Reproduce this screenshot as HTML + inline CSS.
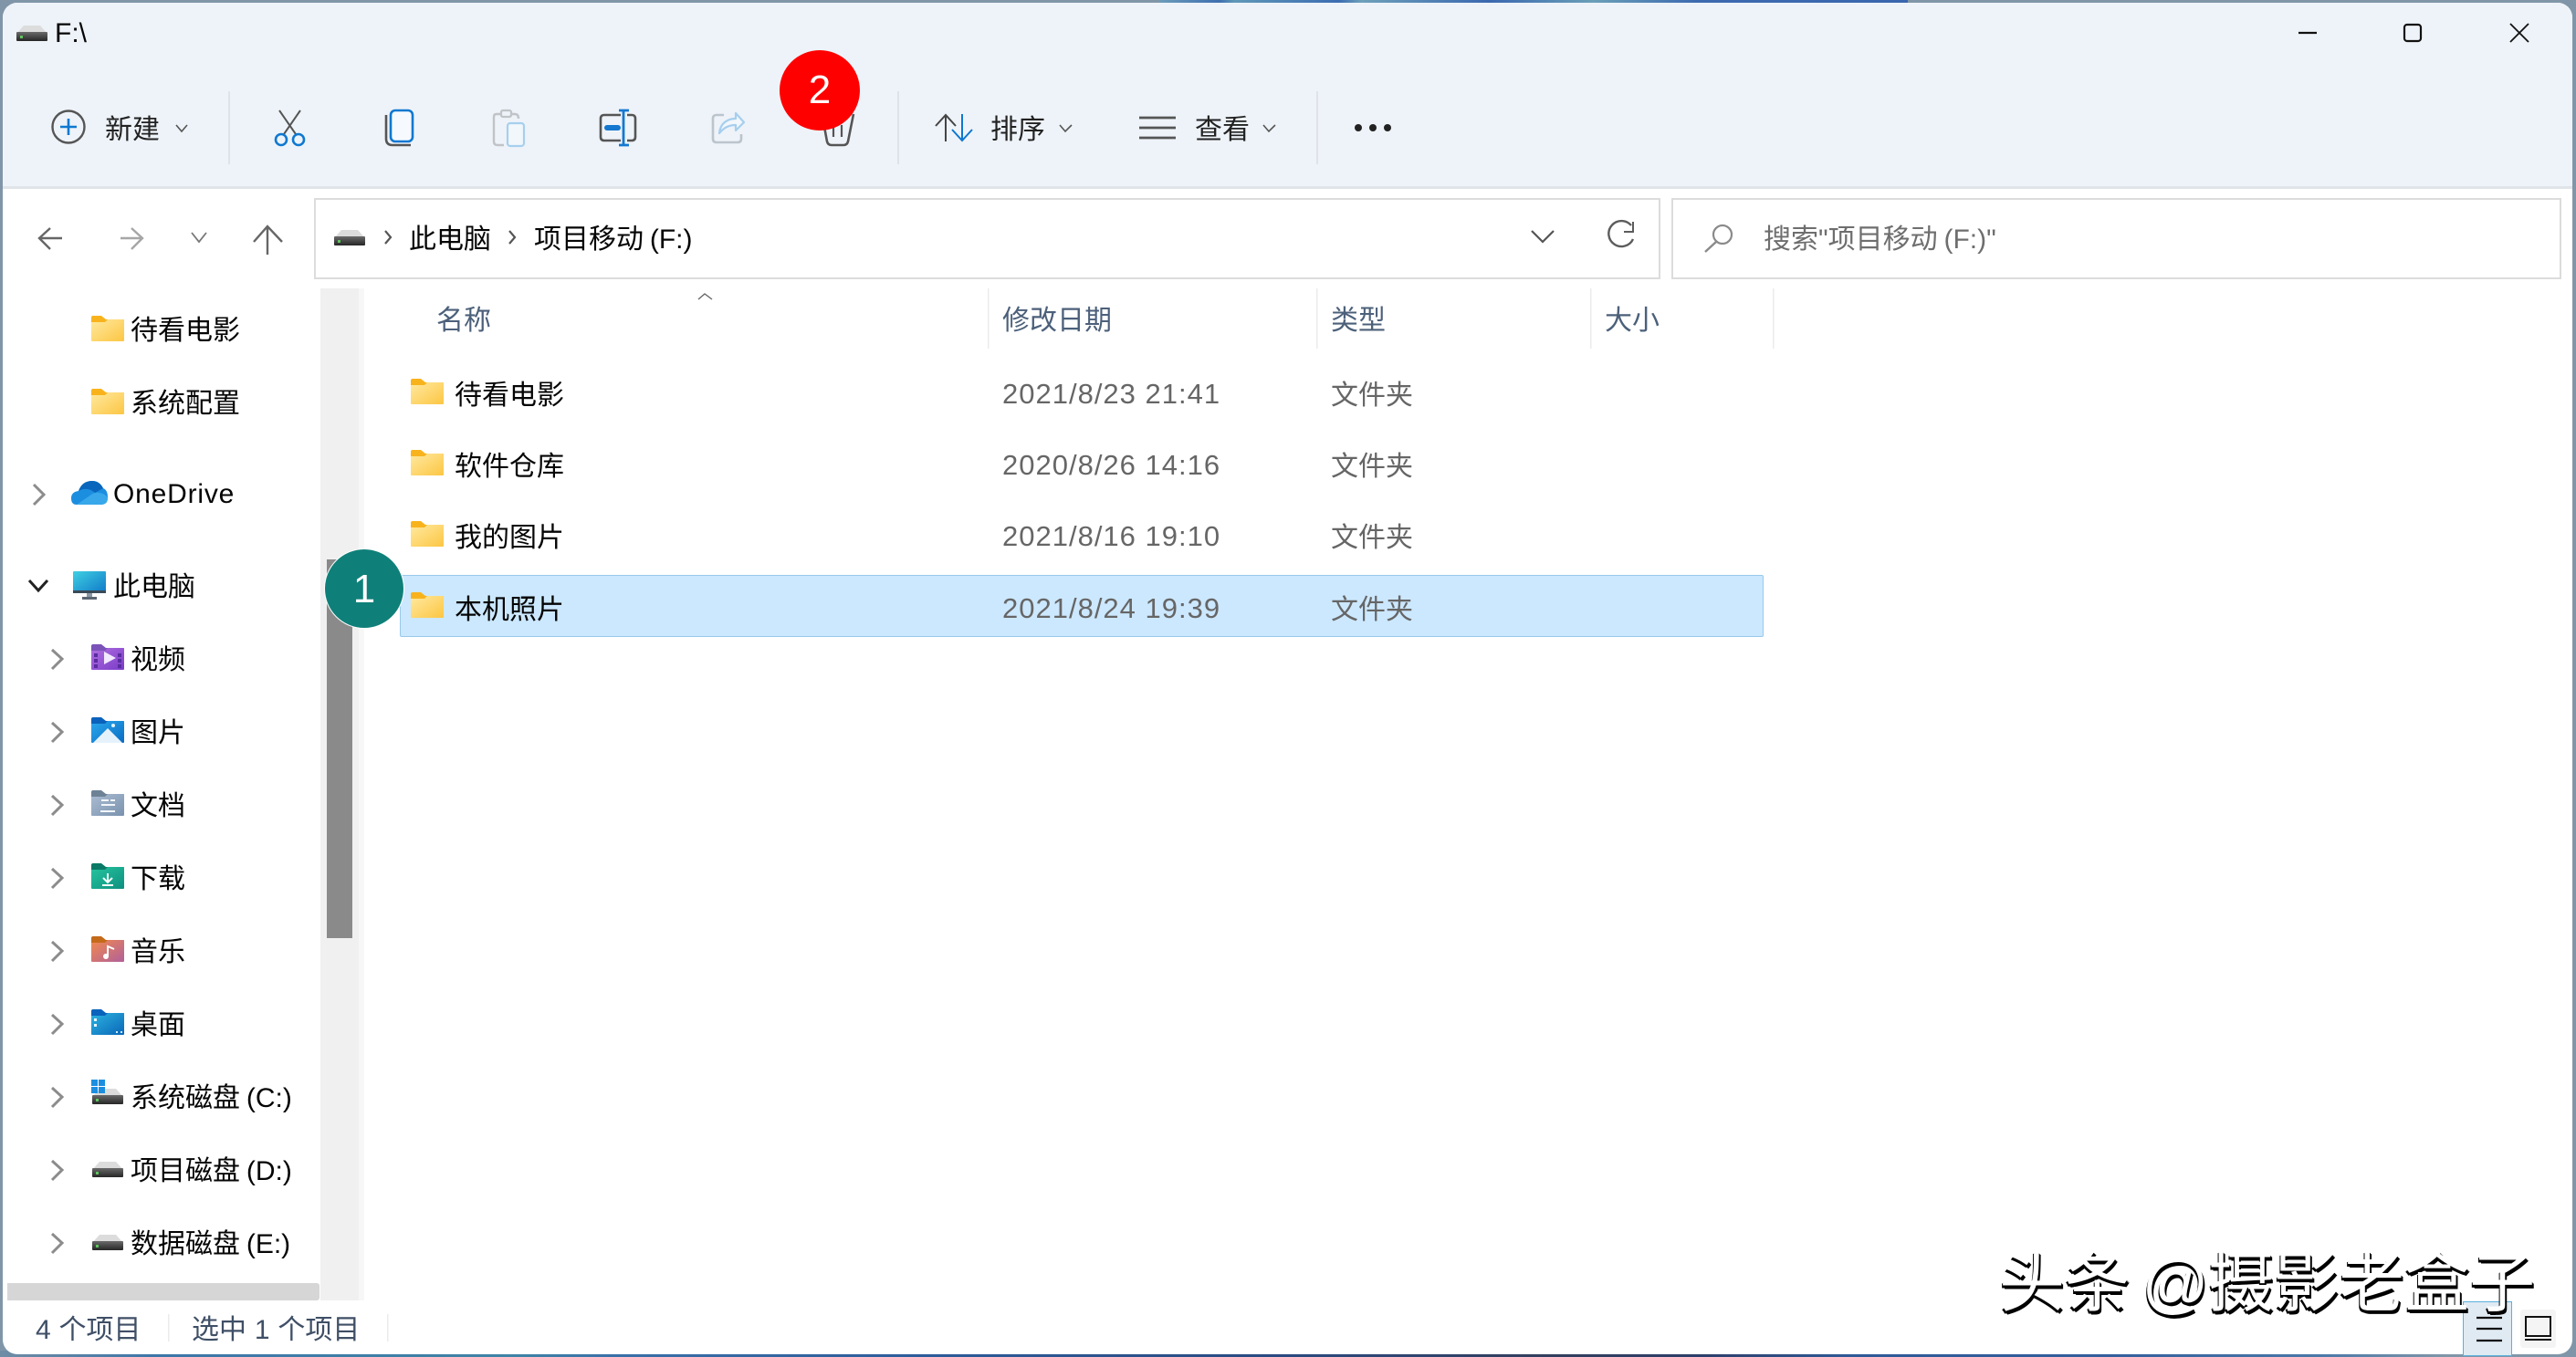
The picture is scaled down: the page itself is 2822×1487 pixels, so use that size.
<!DOCTYPE html>
<html lang="zh-CN">
<head>
<meta charset="utf-8">
<title>F:\</title>
<style>
html,body{margin:0;padding:0;width:2822px;height:1487px;overflow:hidden;background:#8096a8}
body{position:relative;font-family:"Liberation Sans","Noto Sans CJK SC",sans-serif;font-size:30px;color:#050505}
#strip-top{position:absolute;left:1270px;top:0;width:820px;height:6px;background:linear-gradient(90deg,#6b9cba 0,#3f6fb0 8%,#5f98b8 10%,#3b6cb2 24%,#6ea0ba 27%,#3a68b0 44%,#6a9fb8 58%,#3c69b0 72%,#3a66ae 100%)}
#strip-bot{position:absolute;left:0;top:1480px;width:2822px;height:7px;background:linear-gradient(90deg,#6f8ca5 0,#3d76a8 6%,#3f84a6 20%,#3a6fa8 24%,#2d5c9a 36%,#2a4a80 50%,#333f5e 60%,#2d3f6a 66%,#2f5a98 72%,#345f9d 82%,#4a78a8 90%,#8096a8 95%)}
#win{position:absolute;left:3px;top:3px;width:2815px;height:1481px;background:#fff;border-radius:16px;overflow:hidden}
#bar{position:absolute;left:0;top:0;width:2815px;height:201px;background:#eef3f9;border-bottom:3px solid #dfe4e8}
.t{position:absolute;height:40px;line-height:40px;white-space:nowrap;margin-top:2px;word-spacing:-1.5px}
.b{position:absolute}
.hd{color:#4c607a}
.dt{color:#666;font-size:31px;letter-spacing:1px;word-spacing:0;margin-top:0}
.ty{color:#666}
.st{color:#3f4f66;word-spacing:.5px}
#svg{position:absolute;left:0;top:0}
.c{position:absolute;border-radius:50%;color:#fff;text-align:center}
</style>
</head>
<body>
<div id="strip-top"></div>
<div id="strip-bot"></div>
<div id="win"><div id="bar"></div></div>

<!-- address + search -->
<div class="b" style="left:344px;top:217px;width:1471px;height:85px;border:2px solid #dcdcdc;background:#fff"></div>
<div class="b" style="left:1831px;top:217px;width:971px;height:85px;border:2px solid #dcdcdc;background:#fff"></div>

<!-- nav scrollbars -->
<div class="b" style="left:351px;top:316px;width:42px;height:1109px;background:#f0f0f0"></div>
<div class="b" style="left:393px;top:316px;width:6px;height:1109px;background:#f7f7f7"></div>
<div class="b" style="left:358px;top:613px;width:28px;height:415px;background:#8a8a8a"></div>
<div class="b" style="left:8px;top:1406px;width:342px;height:19px;background:#d6d6d6;border-radius:0 3px 3px 0"></div>

<!-- selected row -->
<div class="b" style="left:438px;top:630px;width:1494px;height:68px;background:#cce8ff;border:1px solid #99c9ea;border-radius:2px;box-sizing:border-box"></div>

<!-- view buttons -->
<div class="b" style="left:2698px;top:1426px;width:52px;height:58px;background:#dfeaf3;border:1px solid #5cb0dc"></div>
<div class="b" style="left:2761px;top:1435px;width:39px;height:42px;background:#f4f4f4;border-radius:3px"></div>

<svg id="svg" width="2822" height="1487" viewBox="0 0 2822 1487" xmlns="http://www.w3.org/2000/svg">
<defs>
<linearGradient id="fg" x1="0" y1="0" x2="1" y2="1"><stop offset="0" stop-color="#ffe9a0"/><stop offset="1" stop-color="#fcc643"/></linearGradient>
<linearGradient id="dg" x1="0" y1="0" x2="0" y2="1"><stop offset="0" stop-color="#6a6a6a"/><stop offset="1" stop-color="#262626"/></linearGradient>
<linearGradient id="vg" x1="0" y1="0" x2="1" y2="1"><stop offset="0" stop-color="#b06ee0"/><stop offset="1" stop-color="#7a3cc8"/></linearGradient>
<linearGradient id="pg" x1="0" y1="0" x2="1" y2="1"><stop offset="0" stop-color="#2aa8ec"/><stop offset="1" stop-color="#0a6cc4"/></linearGradient>
<linearGradient id="dcg" x1="0" y1="0" x2="1" y2="1"><stop offset="0" stop-color="#aabcd2"/><stop offset="1" stop-color="#7a92ae"/></linearGradient>
<linearGradient id="dlg" x1="0" y1="0" x2="1" y2="1"><stop offset="0" stop-color="#26c49e"/><stop offset="1" stop-color="#0e9080"/></linearGradient>
<linearGradient id="mg" x1="0" y1="0" x2="1" y2="1"><stop offset="0" stop-color="#f28a4e"/><stop offset="1" stop-color="#b0609a"/></linearGradient>
<linearGradient id="deg" x1="0" y1="0" x2="1" y2="1"><stop offset="0" stop-color="#2cb4e0"/><stop offset="1" stop-color="#0a66b8"/></linearGradient>
<linearGradient id="scr" x1="0" y1="0" x2="1" y2="1"><stop offset="0" stop-color="#3fd0e2"/><stop offset="1" stop-color="#0f78c8"/></linearGradient>
<symbol id="folder" viewBox="0 0 36 28" width="36" height="28" overflow="visible">
<path d="M0 2Q0 0 2 0H11L16 4H35Q36 4 36 5V8H0Z" fill="#f8b31c"/>
<path d="M0 7H15L18 4H35Q36 4 36 5V27Q36 28 35 28H1Q0 28 0 27Z" fill="url(#fg)"/>
</symbol>
<symbol id="drive" viewBox="0 0 34 17" width="34" height="17" overflow="visible">
<path d="M0 9L8 0H26L34 9Z" fill="#dcdcdc"/>
<rect x="0" y="7" width="34" height="10" rx="1" fill="url(#dg)"/>
<rect x="4" y="11" width="3" height="3" fill="#5ec45e"/>
</symbol>
</defs>

<!-- title icon -->
<use href="#drive" x="18" y="28"/>

<!-- new -->
<circle cx="75" cy="139" r="17.5" fill="none" stroke="#555" stroke-width="2.4"/>
<path d="M75 130V148M66 139H84" stroke="#0f78d0" stroke-width="2.6" fill="none"/>
<path d="M193 137L199 144L205 137" stroke="#555" stroke-width="1.6" fill="none"/>
<rect x="250" y="100" width="2" height="80" fill="#dfe3e8"/>

<!-- cut -->
<path d="M306 121L324 147M329 121L311 147" stroke="#555" stroke-width="2" fill="none"/>
<circle cx="308" cy="153" r="6" fill="none" stroke="#0f78d0" stroke-width="2.6"/>
<circle cx="327" cy="153" r="6" fill="none" stroke="#0f78d0" stroke-width="2.6"/>

<!-- copy -->
<path d="M423 126V152Q423 159 430 159H450" stroke="#555" stroke-width="2.6" fill="none"/>
<rect x="428" y="121" width="24" height="34" rx="5" fill="#f6fafe" stroke="#0f78d0" stroke-width="2.6"/>

<!-- paste -->
<path d="M549 125H544Q541 125 541 128V155Q541 159 545 159H552M568 128V130Q568 125 564 125H560" stroke="#c0c4c8" stroke-width="2.4" fill="none"/>
<rect x="549" y="121" width="11" height="7" rx="2" fill="#eef3f9" stroke="#c0c4c8" stroke-width="2.2"/>
<rect x="556" y="135" width="18" height="25" rx="3" fill="#f2f7fb" stroke="#a6cfee" stroke-width="2.2"/>

<!-- rename -->
<path d="M680 126H662Q658 126 658 130V150Q658 154 662 154H680M687 126H692Q696 126 696 130V150Q696 154 692 154H687" stroke="#555" stroke-width="2.6" fill="none"/>
<rect x="662" y="137" width="18" height="6" rx="3" fill="#1478d0"/>
<path d="M683 121V159M678 121H689M678 159H689" stroke="#1478d0" stroke-width="2.8" fill="none"/>

<!-- share -->
<path d="M793 126H785Q781 126 781 130V152Q781 156 785 156H808Q812 156 812 152V147" stroke="#bcc4cc" stroke-width="2.6" fill="none"/>
<path d="M788 146C789 135 797 130 806 130V124L815 134L806 143V137C798 137 793 140 788 146Z" fill="#f2f7fb" stroke="#a6cfee" stroke-width="2.2" stroke-linejoin="round"/>

<!-- delete -->
<path d="M901 128L906 155Q907 159 911 159H924Q928 159 929 155L935 125" stroke="#555" stroke-width="2.6" fill="none"/>
<path d="M913 137V150M922 137V150" stroke="#555" stroke-width="2.2" fill="none"/>

<rect x="983" y="100" width="2" height="80" fill="#dfe3e8"/>

<!-- sort -->
<path d="M1036 155V126M1025 138L1036 126L1047 138" stroke="#444" stroke-width="2" fill="none"/>
<path d="M1054 125V154M1043 142L1054 154L1065 142" stroke="#0f78d0" stroke-width="2" fill="none"/>
<path d="M1161 137L1167 144L1174 137" stroke="#555" stroke-width="1.6" fill="none"/>

<!-- view -->
<path d="M1248 129H1288M1248 140H1288M1248 151H1288" stroke="#555" stroke-width="2.8" fill="none"/>
<path d="M1384 137L1390 144L1397 137" stroke="#555" stroke-width="1.6" fill="none"/>
<rect x="1442" y="100" width="2" height="80" fill="#dfe3e8"/>

<!-- more -->
<circle cx="1488" cy="140" r="4" fill="#222"/><circle cx="1504" cy="140" r="4" fill="#222"/><circle cx="1520" cy="140" r="4" fill="#222"/>

<!-- window controls -->
<path d="M2518 36H2538" stroke="#111" stroke-width="2.2"/>
<rect x="2634" y="27" width="18" height="18" rx="3" fill="none" stroke="#111" stroke-width="2.2"/>
<path d="M2750 26L2770 46M2770 26L2750 46" stroke="#111" stroke-width="1.8"/>

<!-- nav arrows -->
<path d="M67 261H43M54 250L42 261L54 273" stroke="#666" stroke-width="2.4" fill="none" transform="translate(1 0)"/>
<path d="M132 261H155M144 250L156 261L144 273" stroke="#a6a6a6" stroke-width="2.4" fill="none"/>
<path d="M210 255L218 265L226 255" stroke="#777" stroke-width="1.8" fill="none"/>
<path d="M293 279V249M278 265L293 248L309 265" stroke="#666" stroke-width="2.4" fill="none"/>

<!-- address -->
<use href="#drive" x="366" y="252"/>
<path d="M422 253L428 260L422 267" stroke="#555" stroke-width="2.2" fill="none"/>
<path d="M558 253L564 260L558 267" stroke="#555" stroke-width="2.2" fill="none"/>
<path d="M1678 253L1690 265L1702 253" stroke="#555" stroke-width="2.2" fill="none"/>
<path d="M1788 247A14 14 0 1 0 1790 262" stroke="#5c5c5c" stroke-width="2.4" fill="none" transform="translate(-1 0)"/>
<path d="M1789 243V254H1779" stroke="#5c5c5c" stroke-width="2" fill="none"/>

<!-- search -->
<circle cx="1887" cy="257" r="10" fill="none" stroke="#8a8a8a" stroke-width="2.2"/>
<path d="M1880 265L1868 276" stroke="#8a8a8a" stroke-width="2.4"/>

<!-- nav chevrons -->
<g stroke="#8c8c8c" stroke-width="3" fill="none">
<path d="M37 531L48 542L37 553"/>
<path d="M57 712L68 722L57 733"/><path d="M57 792L68 802L57 813"/><path d="M57 872L68 882L57 893"/>
<path d="M57 952L68 962L57 973"/><path d="M57 1032L68 1042L57 1053"/><path d="M57 1112L68 1122L57 1133"/>
<path d="M57 1192L68 1202L57 1213"/><path d="M57 1272L68 1282L57 1293"/><path d="M57 1352L68 1362L57 1373"/>
</g>
<path d="M32 636L42 647L52 636" stroke="#222" stroke-width="3" fill="none"/>

<!-- quick folders -->
<use href="#folder" x="100" y="346"/>
<use href="#folder" x="100" y="426"/>

<!-- OneDrive -->
<path d="M84 553Q78 553 78 546Q78 539 86 538Q90 527 101 527Q109 527 113 535Q118 537 118 545Q118 553 110 553Z" fill="#1c8ee0"/>
<path d="M86 538Q90 527 101 527Q109 527 113 535L104 540Q96 533 86 538Z" fill="#0a66bc"/>
<path d="M84 553L100 542Q105 538 113 541Q118 544 118 546Q118 553 110 553Z" fill="#38a8ea"/>

<!-- monitor -->
<rect x="80" y="626" width="36" height="24" rx="1" fill="url(#scr)"/>
<rect x="80" y="647" width="36" height="3" fill="#3a4a58"/>
<rect x="95" y="650" width="6" height="4" fill="#8a98a6"/>
<rect x="90" y="654" width="16" height="3" fill="#5a6672"/>

<!-- video -->
<path d="M100 708Q100 706 102 706H111L116 710H135Q136 710 136 711V716H100Z" fill="#7b52b8"/>
<path d="M100 713H115L118 710H135Q136 710 136 711V733Q136 734 135 734H101Q100 734 100 733Z" fill="url(#vg)"/>
<path d="M114 714L127 721L114 728Z" fill="#f2e8ff"/>
<path d="M103 716h4v4h-4zM103 722h4v4h-4zM103 728h4v4h-4zM129 716h4v4h-4zM129 722h4v4h-4zM129 728h4v4h-4z" fill="#5a2ca0"/>

<!-- pictures -->
<path d="M100 788Q100 786 102 786H111L116 790H135Q136 790 136 791V796H100Z" fill="#0a62bc"/>
<path d="M100 793H115L118 790H135Q136 790 136 791V813Q136 814 135 814H101Q100 814 100 813Z" fill="url(#pg)"/>
<path d="M102 814L118 798L134 814Z" fill="#e6f2fb"/>
<circle cx="124" cy="795" r="2" fill="#e6f2fb"/>

<!-- documents -->
<path d="M100 868Q100 866 102 866H111L116 870H135Q136 870 136 871V876H100Z" fill="#6e8296"/>
<path d="M100 873H115L118 870H135Q136 870 136 871V893Q136 894 135 894H101Q100 894 100 893Z" fill="url(#dcg)"/>
<path d="M111 876h8v2h-8zM121 876h5v2h-5zM111 881h15v2h-15zM110 888h16v2h-16z" fill="#f2f6fa"/>

<!-- downloads -->
<path d="M100 948Q100 946 102 946H111L116 950H135Q136 950 136 951V956H100Z" fill="#0a7a66"/>
<path d="M100 953H115L118 950H135Q136 950 136 951V973Q136 974 135 974H101Q100 974 100 973Z" fill="url(#dlg)"/>
<path d="M118 957V966M113 962L118 967L123 962M112 970H124" stroke="#f2fffb" stroke-width="2" fill="none"/>

<!-- music -->
<path d="M100 1028Q100 1026 102 1026H111L116 1030H135Q136 1030 136 1031V1036H100Z" fill="#c46a1a"/>
<path d="M100 1033H115L118 1030H135Q136 1030 136 1031V1053Q136 1054 135 1054H101Q100 1054 100 1053Z" fill="url(#mg)"/>
<circle cx="116" cy="1048" r="3" fill="#fff"/><path d="M118 1048V1037L125 1040" stroke="#fff" stroke-width="2" fill="none"/>

<!-- desktop -->
<path d="M100 1108Q100 1106 102 1106H111L116 1110H135Q136 1110 136 1111V1116H100Z" fill="#0a62bc"/>
<path d="M100 1113H115L118 1110H135Q136 1110 136 1111V1133Q136 1134 135 1134H101Q100 1134 100 1133Z" fill="url(#deg)"/>
<path d="M103 1116h3v3h-3zM103 1122h3v3h-3z" fill="#e8f6ff"/><path d="M127 1130h2v2h-2zM132 1130h2v2h-2z" fill="#cfeaff"/>

<!-- drives -->
<use href="#drive" x="101" y="1193"/>
<path d="M100 1183h7v7h-7zM108 1183h7v7h-7zM100 1191h7v7h-7zM108 1191h7v7h-7z" fill="#1c8ee0"/>
<use href="#drive" x="101" y="1273"/>
<use href="#drive" x="101" y="1353"/>

<!-- header -->
<path d="M765 328L772 322L780 328" stroke="#666" stroke-width="1.4" fill="none"/>
<g fill="#ebebeb">
<rect x="1082" y="316" width="1.5" height="66"/><rect x="1442" y="316" width="1.5" height="66"/>
<rect x="1742" y="316" width="1.5" height="66"/><rect x="1942" y="316" width="1.5" height="66"/>
<rect x="184" y="1440" width="1.5" height="30"/><rect x="424" y="1440" width="1.5" height="30"/>
</g>
<use href="#folder" x="450" y="415"/>
<use href="#folder" x="450" y="493"/>
<use href="#folder" x="450" y="571"/>
<use href="#folder" x="450" y="649"/>
</svg>

<!-- toolbar text -->
<div class="t" style="left:60px;top:15px">F:\</div>
<div class="t" style="left:115px;top:121px;color:#222">新建</div>
<div class="t" style="left:1085px;top:121px;color:#222">排序</div>
<div class="t" style="left:1309px;top:121px;color:#222">查看</div>

<!-- address text -->
<div class="t" style="left:448px;top:241px">此电脑</div>
<div class="t" style="left:585px;top:241px">项目移动 (F:)</div>
<div class="t" style="left:1932px;top:241px;color:#6e6e6e">搜索"项目移动 (F:)"</div>

<!-- nav -->
<div class="t" style="left:143px;top:341px">待看电影</div>
<div class="t" style="left:143px;top:421px">系统配置</div>
<div class="t" style="left:124px;top:520px;letter-spacing:.8px">OneDrive</div>
<div class="t" style="left:124px;top:622px">此电脑</div>
<div class="t" style="left:143px;top:702px">视频</div>
<div class="t" style="left:143px;top:782px">图片</div>
<div class="t" style="left:143px;top:862px">文档</div>
<div class="t" style="left:143px;top:942px">下载</div>
<div class="t" style="left:143px;top:1022px">音乐</div>
<div class="t" style="left:143px;top:1102px">桌面</div>
<div class="t" style="left:143px;top:1182px">系统磁盘 (C:)</div>
<div class="t" style="left:143px;top:1262px">项目磁盘 (D:)</div>
<div class="t" style="left:143px;top:1342px">数据磁盘 (E:)</div>

<!-- list header -->
<div class="t hd" style="left:478px;top:330px">名称</div>
<div class="t hd" style="left:1098px;top:330px">修改日期</div>
<div class="t hd" style="left:1458px;top:330px">类型</div>
<div class="t hd" style="left:1758px;top:330px">大小</div>

<!-- rows -->
<div class="t" style="left:498px;top:412px">待看电影</div>
<div class="t dt" style="left:1098px;top:412px">2021/8/23 21:41</div>
<div class="t ty" style="left:1458px;top:412px">文件夹</div>
<div class="t" style="left:498px;top:490px">软件仓库</div>
<div class="t dt" style="left:1098px;top:490px">2020/8/26 14:16</div>
<div class="t ty" style="left:1458px;top:490px">文件夹</div>
<div class="t" style="left:498px;top:568px">我的图片</div>
<div class="t dt" style="left:1098px;top:568px">2021/8/16 19:10</div>
<div class="t ty" style="left:1458px;top:568px">文件夹</div>
<div class="t" style="left:498px;top:647px">本机照片</div>
<div class="t dt" style="left:1098px;top:647px">2021/8/24 19:39</div>
<div class="t ty" style="left:1458px;top:647px">文件夹</div>

<!-- status -->
<div class="t st" style="left:39px;top:1436px">4 个项目</div>
<div class="t st" style="left:210px;top:1436px">选中 1 个项目</div>

<!-- watermark -->
<div class="t" style="left:2190px;top:1365px;height:80px;line-height:80px;font-size:72px;letter-spacing:-.5px;word-spacing:-6px;color:#fff;text-shadow:2px 4px 0 #000,1px 3px 0 #000,0 2px 0 #000,-1px 3px 0 #000">头条 @摄影老盒子</div>

<!-- view button icons (over watermark) -->
<svg class="b" style="left:2698px;top:1426px" width="110" height="58" viewBox="2698 1426 110 58" xmlns="http://www.w3.org/2000/svg">
<path d="M2713 1444H2741M2713 1456H2741M2713 1469H2741" stroke="#111" stroke-width="2.2" fill="none"/>
<rect x="2767" y="1443" width="27" height="21" fill="none" stroke="#111" stroke-width="2"/>
<path d="M2766 1468H2795" stroke="#111" stroke-width="2"/>
</svg>

<!-- badges -->
<div class="c" style="left:854px;top:55px;width:88px;height:88px;background:#ff0000;font-size:44px;line-height:88px">2</div>
<div class="c" style="left:355px;top:601px;width:86px;height:86px;background:#0f8079;border:1px solid #fff;font-size:44px;line-height:88px">1</div>
</body>
</html>
